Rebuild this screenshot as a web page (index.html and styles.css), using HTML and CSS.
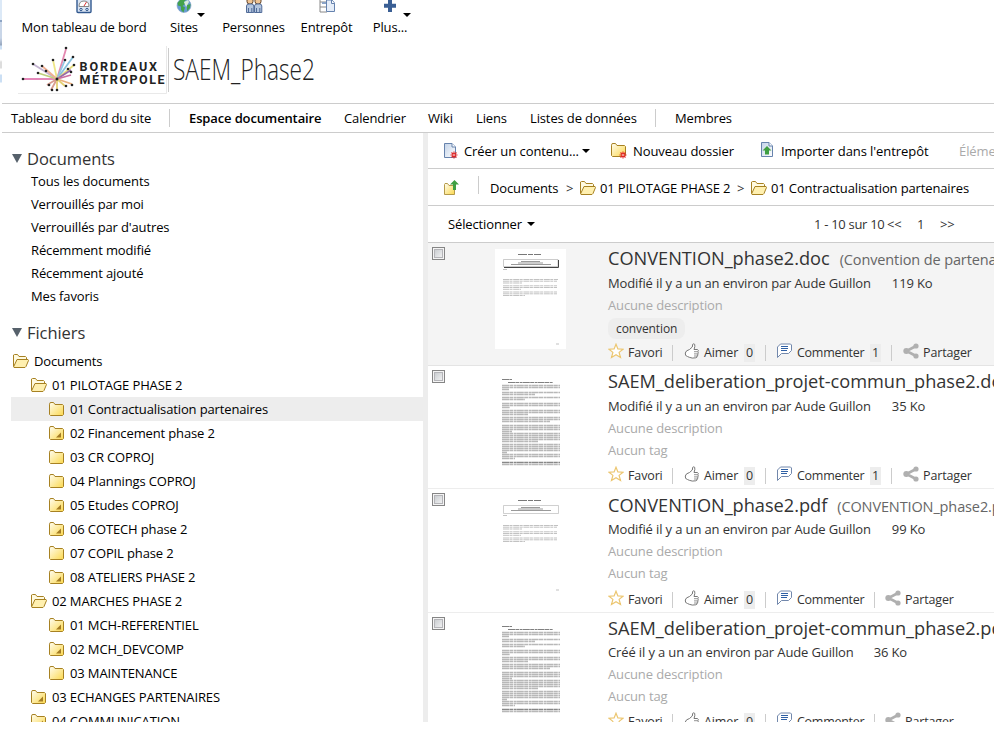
FILE: index.html
```
<!DOCTYPE html>
<html lang="fr">
<head>
<meta charset="utf-8">
<title>SAEM_Phase2</title>
<link rel="stylesheet" href="styles.css">
</head>
<body>
<svg class="defs" width="0" height="0">
  <defs>
    <linearGradient id="gold" x1="0" y1="0" x2="1" y2="1"><stop offset="0" stop-color="#fffdf0"/><stop offset="1" stop-color="#fbd84e"/></linearGradient>
    <linearGradient id="sheet" x1="0" y1="0" x2="1" y2="1"><stop offset="0" stop-color="#c3d3e8"/><stop offset="1" stop-color="#fff"/></linearGradient>
    <symbol id="closed" viewBox="0 0 16 16"><path d="M1.5 3.2 2.2 1.5H5.5L7 3.5H14.5L15.5 4.5V13.5L14.5 14.5H2.5L1.5 13.5Z" fill="url(#gold)" stroke="#a78122"/></symbol>
    <symbol id="linked" viewBox="0 0 16 16"><use href="#closed"/><path d="M8 12.5 13 7.5V12.5Z" fill="#a37c25"/></symbol>
    <symbol id="open" viewBox="0 0 17 16"><path d="M1.500 13.500V2L2.500 1.500H5.500L7 3.500H13.500L14.500 4.500V6.500" fill="#fffae0" stroke="#a78122"/><path d="M1.500 14 5 6.500H16L16.500 7.500 14 13.500 13 14.500H2Z" fill="#fff0b0" stroke="#a78122"/></symbol>
    <symbol id="burst" viewBox="0 0 8 8"><path d="M4 .5V7.500M.5 4H7.500M1.500 1.500 6.500 6.500M6.500 1.500 1.500 6.500" stroke="#e02525" stroke-width="1.100"/><rect x="3.300" y="3.300" width="1.400" height="1.400" fill="#fff"/></symbol>
    <symbol id="star" viewBox="0 0 16 16"><path d="M8 1.200 9.900 5.900 15 6.200 11.100 9.400 12.500 14.500 8 11.700 3.500 14.500 4.900 9.400 1 6.200 6.100 5.900Z" fill="#fff" stroke="#ecc670" stroke-width="1.200"/></symbol>
    <symbol id="thumb" viewBox="0 0 16 16"><path d="M5.500 6.500 8.300 4 8.700 1.300Q9.500.4 10.700 1.300 11.300 3.500 10 6.500H13.500Q15 7.300 13.800 8.800 14.800 9.800 13.700 11 14.400 12.200 13.200 13 13.300 14.500 11.800 14.800 8 15.600 5.300 14.300L3.500 13.500Q.8 13 1.300 10 1.700 7.500 5.500 6.500Z" fill="#fff" stroke="#777"/><path d="M10 8.700H13.500M10 10.900H13.400M10 13H13" stroke="#777" stroke-width=".8"/></symbol>
    <symbol id="comment" viewBox="0 0 16 16"><path d="M1.500 14.500V4L4.500 1H14.500L15.500 2V7.500L12.500 10.500H5.500Z" fill="#fff" stroke="#7288ac"/><path d="M5 3.500H12M5 5.500H12M5 7.500H11" stroke="#2f60a5"/></symbol>
    <symbol id="share" viewBox="0 0 16 16"><path d="M13 3 3.500 8 13 13" fill="none" stroke="#b0b0b0" stroke-width="2.600"/><circle cx="13" cy="3" r="2.600" fill="#b0b0b0"/><circle cx="3.300" cy="8" r="3" fill="#b0b0b0"/><circle cx="13" cy="13" r="2.600" fill="#b0b0b0"/></symbol>
    <symbol id="convention" viewBox="0 0 71 100">
      <g fill="none" stroke="#999" stroke-width=".6">
        <path d="M23 5.500H46" stroke="#555" stroke-width=".8" stroke-dasharray="9 1 5 1"/><path d="M26 12.500H45M23 14H48M16 15.500H56" stroke="#555"/><path d="M8 20.500H12"/>
        <path d="M8 30.500H63M8 32.200H62M8 34H27M8 36.800H62M8 38.500H62M8 40.300H26M8 43H62M8 44.800H62M8 46.500H30" stroke-dasharray="6 .5 3 .7"/>
        <path d="M61 95H64"/>
      </g>
    </symbol>
    <symbol id="deliberation" viewBox="0 0 71 100">
      <g fill="none" stroke="#b8b8b8" stroke-width="1.300" stroke-dasharray="7 .4 4 .6 2.500 .3">
        <path d="M7 7.500H17M13 10.500H58" stroke="#808080" stroke-width="1"/>
        <path d="M7 13.500H65M7 15.500H65M7 17.500H14M7 20.500H65M7 22.500H40M7 25.500H65M7 27.500H30M7 31.500H65M7 33.500H65M7 35.500H15M7 38.500H65M7 40.500H65M7 42.500H33M7 45.500H65M7 47.500H65M7 49.500H55M7 53.500H65M7 55.500H65M7 57.500H65M7 59.500H17M7 61.500H65M7 63.500H65M7 65.500H65M7 67.500H65M7 69.500H43M7 72.500H65M7 74.500H65M7 76.500H65M7 78.500H65M7 80.500H12M7 82.500H65M7 84.500H65M7 86.500H20"/>
        <path d="M7 90.500H65" stroke="#888"/><path d="M7 92.500H65"/>
      </g>
    </symbol>
  </defs>
</svg>
<div class="page">
  <div class="edge"></div>
  <nav class="global">
    <a class="g1"><svg width="16" height="16" viewBox="0 0 16 16"><rect x="1" y="-1" width="14" height="15.500" rx="1" fill="#dbe6f4" stroke="#31588f" stroke-width="1.400"/><path d="M3 8.500Q3 3 8 3T13 8.500Z" fill="#fff" stroke="#888"/><path d="M8 8 10.500 4" stroke="#d33"/><circle cx="5" cy="11.500" r="1.200" fill="none" stroke="#31588f"/><circle cx="11" cy="11.500" r="1.200" fill="none" stroke="#31588f"/></svg><span>Mon tableau de bord</span></a>
    <a class="g2 more"><svg width="16" height="16" viewBox="0 0 16 16"><circle cx="8" cy="7.500" r="7" fill="#679bd3" stroke="#8aa5c8" stroke-width=".6"/><path d="M1.500 5 5 1 11 .8 8 4 9 6 6.500 8 9 9.500 7.500 14.500 5 12 5 8.500 2 7.500ZM11 7 14.500 6 14 10 11 13Z" fill="#43a24c"/><path d="M8 4 12 2 13 4 10 9Z" fill="#d7ecdc"/></svg><span>Sites</span></a>
    <a class="g3"><svg width="18" height="16" viewBox="0 0 18 16"><rect x="2" y="-2" width="6" height="8" rx="2.500" fill="#efc392" stroke="#5c3e25"/><rect x="10" y="-2" width="6" height="8" rx="2.500" fill="#efc392" stroke="#5c3e25"/><path d="M1.500 8Q1.500 6 4 6H6.500Q8.800 6 8.800 8V14.500H1.500ZM9.500 8Q9.500 6 12 6H14.500Q16.800 6 16.800 8V14.500H9.500Z" fill="#b4c6df" stroke="#526c99"/><path d="M3.500 10V14M6.800 10V14M11.500 10V14M14.800 10V14" stroke="#526c99"/></svg><span>Personnes</span></a>
    <a class="g4"><svg width="18" height="16" viewBox="0 0 18 16"><path d="M2 0V14H9M2 4H8M2 9H8" fill="none" stroke="#888"/><path d="M4 .5H9M4 5H9" stroke="#8aa3c6" stroke-width="2"/><path d="M8.500 2H14L16.500 5V13.500H8.500Z" fill="#e5edf8" stroke="#6582ae"/><path d="M13.500 2V5.500H16.500" fill="#fff" stroke="#6582ae"/></svg><span>Entrepôt</span></a>
    <a class="g5 more"><svg width="16" height="16" viewBox="0 0 16 16"><path d="M8 1.500V14M2 7.700H14" stroke="#3a5f94" stroke-width="4"/></svg><span>Plus...</span></a>
  </nav>
  <header class="site">
    <svg class="logo" width="150" height="50" viewBox="0 0 150 50">
      <path d="M148.500 0V47.500H0" fill="none" stroke="#e9e9e9"/>
      <g fill="none" stroke-width="1.800" opacity=".8">
        <path d="M39 33 48 3" stroke="#de6b9c"/><path d="M39 33 5 33" stroke="#de6ba8"/><path d="M39 33 35 14" stroke="#ebe16b"/><path d="M39 33 15 18" stroke="#b5a1c6"/><path d="M39 33 20 27" stroke="#b0c55c"/><path d="M39 33 24 20" stroke="#ed9c77"/><path d="M39 33 47 14" stroke="#78b8db"/><path d="M39 33 55 11" stroke="#68b4d7"/><path d="M39 33 56 19" stroke="#dfd35c"/><path d="M39 33 53 24" stroke="#7e4694"/><path d="M39 33 53 29" stroke="#be4b8a"/><path d="M39 33 54 38" stroke="#e49c5e"/><path d="M39 33 29 39M39 33 33 44" stroke="#d18575"/><path d="M39 33 39 44M39 33 47 40" stroke="#dfc654"/>
      </g>
      <g fill="#222"><circle cx="48" cy="2" r="1.300"/><circle cx="55" cy="11" r="1.300"/><circle cx="47" cy="14" r="1.300"/><circle cx="35" cy="14" r="1.300"/><circle cx="15" cy="18" r="1.300"/><circle cx="24" cy="20" r="1.300"/><circle cx="56" cy="19" r="1.300"/><circle cx="50" cy="23" r="1.300"/><circle cx="53" cy="26" r="1.300"/><circle cx="20" cy="27" r="1.300"/><circle cx="28" cy="25" r="1.300"/><circle cx="5" cy="33" r="1.300"/><circle cx="39" cy="33" r="1.500"/><circle cx="54" cy="39" r="1.300"/><circle cx="31" cy="39" r="1.300"/><circle cx="34" cy="44" r="1.300"/><circle cx="39" cy="44" r="1.300"/><circle cx="48" cy="40" r="1.300"/></g>
      <text class="brand" x="61.500" y="25" textLength="77.500">BORDEAUX</text>
      <text class="brand" x="61.500" y="38" textLength="85">MÉTROPOLE</text>
    </svg>
    <svg class="sitename" width="161" height="44" viewBox="0 0 160 44"><text x="4" y="31.500" textLength="142" lengthAdjust="spacingAndGlyphs">SAEM_Phase2</text></svg>
  </header>
  <nav class="tabs">
    <a class="t1">Tableau de bord du site</a><i></i><a class="t2">Espace documentaire</a><a class="t3">Calendrier</a><a class="t4">Wiki</a><a class="t5">Liens</a><a class="t6">Listes de données</a><i></i><a class="t7">Membres</a>
  </nav>
  <div class="columns">
    <aside>
      <h2>Documents</h2>
      <ul class="filters"><li>Tous les documents</li><li>Verrouillés par moi</li><li>Verrouillés par d'autres</li><li>Récemment modifié</li><li>Récemment ajouté</li><li>Mes favoris</li></ul>
      <h2>Fichiers</h2>
      <ul class="tree">
        <li><svg class="wide"><use href="#open"/></svg><span>Documents</span></li>
        <li class="l1"><svg class="wide"><use href="#open"/></svg><span>01 PILOTAGE PHASE 2</span></li>
        <li class="l2 current"><svg><use href="#closed"/></svg><span>01 Contractualisation partenaires</span></li>
        <li class="l2"><svg><use href="#linked"/></svg><span>02 Financement phase 2</span></li>
        <li class="l2"><svg><use href="#closed"/></svg><span>03 CR COPROJ</span></li>
        <li class="l2"><svg><use href="#closed"/></svg><span>04 Plannings COPROJ</span></li>
        <li class="l2"><svg><use href="#linked"/></svg><span>05 Etudes COPROJ</span></li>
        <li class="l2"><svg><use href="#linked"/></svg><span>06 COTECH phase 2</span></li>
        <li class="l2"><svg><use href="#closed"/></svg><span>07 COPIL phase 2</span></li>
        <li class="l2"><svg><use href="#linked"/></svg><span>08 ATELIERS PHASE 2</span></li>
        <li class="l1"><svg class="wide"><use href="#open"/></svg><span>02 MARCHES PHASE 2</span></li>
        <li class="l2"><svg><use href="#linked"/></svg><span>01 MCH-REFERENTIEL</span></li>
        <li class="l2"><svg><use href="#linked"/></svg><span>02 MCH_DEVCOMP</span></li>
        <li class="l2"><svg><use href="#closed"/></svg><span>03 MAINTENANCE</span></li>
        <li class="l1"><svg><use href="#linked"/></svg><span>03 ECHANGES PARTENAIRES</span></li>
        <li class="l1"><svg><use href="#linked"/></svg><span>04 COMMUNICATION</span></li>
      </ul>
    </aside>
    <main>
      <div class="bar tools">
        <svg width="16" height="16" viewBox="0 0 16 16"><path d="M1.500.5H9L12.500 4V14.500H1.500Z" fill="url(#sheet)" stroke="#6783ad"/><path d="M9 .5V4H12.500" fill="#fff" stroke="#6783ad"/><use href="#burst" x="7" y="8" width="8" height="8"/></svg>
        <span class="create">Créer un contenu...</span><b class="caret"></b>
        <svg class="newf" width="16" height="16" viewBox="0 0 16 16"><use href="#closed" x="-1" y="-1" width="16" height="16"/><use href="#burst" x="8" y="8" width="8" height="8"/></svg>
        <span class="folder">Nouveau dossier</span>
        <svg class="imp" width="14" height="16" viewBox="0 0 14 16"><path d="M1.500.5H9L12.500 4V14.500H1.500Z" fill="url(#sheet)" stroke="#6783ad"/><path d="M9 .5V4H12.500" fill="#fff" stroke="#6783ad"/><path d="M7 4 11.500 8.500H9V12.500H5V8.500H2.500Z" fill="#3f9f42"/></svg>
        <span class="import">Importer dans l'entrepôt</span>
        <span class="off">Éléments sélectionnés...</span>
      </div>
      <div class="bar crumbs">
        <svg width="16" height="16" viewBox="0 0 16 16"><path d="M1.500 4.500 2 3.500H4.500L6 5.500H11.500V14.500H1.500Z" fill="url(#gold)" stroke="#b59a4a"/><path d="M11.500 0 16 4.500H13V10H10V4.500H7Z" fill="#3f9f42"/></svg>
        <i></i><span class="c1">Documents</span><span class="gt">&gt;</span><svg class="wide"><use href="#open"/></svg><span class="c2">01 PILOTAGE PHASE 2</span><span class="gt">&gt;</span><svg class="wide"><use href="#open"/></svg><span class="c3">01 Contractualisation partenaires</span>
      </div>
      <div class="bar picker"><span class="select">Sélectionner</span><b class="caret"></b><span class="count">1 - 10 sur 10</span><span class="prev">&lt;&lt;</span><span class="num">1</span><span class="next">&gt;&gt;</span></div>

      <article class="row hover">
        <div class="check"></div><svg class="preview paper"><use href="#convention"/><path d="M8.500 10.500H63V17.500H8.500Z" fill="none" stroke="#aaa" stroke-width=".6"/><path d="M9 18.500H63.500V11" fill="none" stroke="#444"/></svg>
        <div class="info"><h3><span>CONVENTION_phase2.doc</span><small>(Convention de partenariat)</small></h3>
        <p class="meta"><span>Modifié il y a un an environ par Aude Guillon</span><span>119 Ko</span></p><p class="none">Aucune description</p><p class="tagline"><em>convention</em></p>
        <div class="acts"><svg><use href="#star"/></svg><span class="fav">Favori</span><i></i><svg class="th"><use href="#thumb"/></svg><span class="like">Aimer</span><b>0</b><i></i><svg class="cm"><use href="#comment"/></svg><span class="com">Commenter</span><b>1</b><i class="last"></i><svg class="sh"><use href="#share"/></svg><span class="part">Partager</span></div></div>
      </article>
      <article class="row">
        <div class="check"></div><svg class="preview"><use href="#deliberation"/></svg>
        <div class="info"><h3><span>SAEM_deliberation_projet-commun_phase2.doc</span></h3>
        <p class="meta"><span>Modifié il y a un an environ par Aude Guillon</span><span>35 Ko</span></p><p class="none">Aucune description</p><p class="none tagline">Aucun tag</p>
        <div class="acts"><svg><use href="#star"/></svg><span class="fav">Favori</span><i></i><svg class="th"><use href="#thumb"/></svg><span class="like">Aimer</span><b>0</b><i></i><svg class="cm"><use href="#comment"/></svg><span class="com">Commenter</span><b>1</b><i class="last"></i><svg class="sh"><use href="#share"/></svg><span class="part">Partager</span></div></div>
      </article>
      <article class="row tall">
        <div class="check"></div><svg class="preview"><use href="#convention"/><path d="M8.500 10.500H63.500V18.500H8.500Z" fill="none" stroke="#bbb" stroke-width=".7"/></svg>
        <div class="info"><h3><span>CONVENTION_phase2.pdf</span><small>(CONVENTION_phase2.pdf)</small></h3>
        <p class="meta"><span>Modifié il y a un an environ par Aude Guillon</span><span>99 Ko</span></p><p class="none">Aucune description</p><p class="none tagline">Aucun tag</p>
        <div class="acts"><svg><use href="#star"/></svg><span class="fav">Favori</span><i></i><svg class="th"><use href="#thumb"/></svg><span class="like">Aimer</span><b>0</b><i></i><svg class="cm"><use href="#comment"/></svg><span class="com">Commenter</span><i></i><svg class="sh"><use href="#share"/></svg><span class="part">Partager</span></div></div>
      </article>
      <article class="row end">
        <div class="check"></div><svg class="preview"><use href="#deliberation"/></svg>
        <div class="info"><h3><span>SAEM_deliberation_projet-commun_phase2.pdf</span></h3>
        <p class="meta"><span>Créé il y a un an environ par Aude Guillon</span><span>36 Ko</span></p><p class="none">Aucune description</p><p class="none tagline">Aucun tag</p>
        <div class="acts"><svg><use href="#star"/></svg><span class="fav">Favori</span><i></i><svg class="th"><use href="#thumb"/></svg><span class="like">Aimer</span><b>0</b><i></i><svg class="cm"><use href="#comment"/></svg><span class="com">Commenter</span><i></i><svg class="sh"><use href="#share"/></svg><span class="part">Partager</span></div></div>
      </article>
    </main>
  </div>
</div>
</body>
</html>
```
FILE: styles.css
```
* { box-sizing: border-box; }
body { margin: 0; width: 994px; height: 746px; overflow: hidden; background: #fff; font: 13px/18px "Open Sans", sans-serif; letter-spacing: -.13px; color: #000; white-space: nowrap; }
ul, h2, h3, p { margin: 0; padding: 0; list-style: none; font-weight: 400; }
i, em { font-style: normal; }
.defs { position: absolute; }
svg { display: block; flex: none; letter-spacing: 0; }
.page { position: relative; height: 722px; overflow: hidden; display: flex; flex-direction: column; }
.edge { position: absolute; left: 0; top: 0; width: 2px; height: 83px; background: linear-gradient(#dce9f7 0 20px, #8da4c4 20px 22px, #c9d6e8 22px 38px, #95a5bd 45px, #cbdff4 46px 49px, #fff 50px 60px, #ddd 62px 68px, #fff 69px 74px, #cbdff4 75px 82px, #fff 83px); }

.global { height: 42px; flex: none; display: flex; padding-left: 21px; }
.global a { position: relative; display: flex; flex-direction: column; align-items: center; flex: none; margin-top: -2px; }
.global span { margin-top: 4px; }
.g1 { width: 126px; margin-right: 23px; }
.g2 { width: 28px; margin-right: 24px; }
.g3 { width: 63px; margin-right: 15px; }
.g4 { width: 53px; margin-right: 20px; }
.g5 { width: 34px; }
.more::after, .caret { content: ""; border: 4px solid transparent; border-top-color: #000; border-bottom: 0; }
.more::after { position: absolute; left: 27px; top: 15px; }
.g5.more::after { left: 30px; }
.caret { width: 8px; height: 4px; flex: none; }

.site { height: 61px; flex: none; display: flex; padding: 4px 0 0 18px; }
.logo, .sitename { overflow: visible; }
.brand { font: 700 12.5px Roboto, sans-serif; fill: #222; }
.sitename { height: 44px; margin-top: 2px; border-left: 1px solid #ccc; }
.sitename text { font: 300 30px "Open Sans", sans-serif; fill: #222; }

.tabs { height: 30px; flex: none; margin-left: 2px; padding-left: 9px; border: solid #ccc; border-width: 1px 0; display: flex; align-items: center; }
.tabs a, .tabs i { flex: none; }
.tabs i { width: 1px; height: 18px; background: #ccc; margin-right: 19px; }
.t1 { width: 158px; } .t2 { width: 155px; font-weight: 600; } .t3 { width: 84px; } .t4 { width: 48px; } .t5 { width: 54px; } .t6 { width: 125px; }

.columns { display: flex; flex: 1; min-height: 0; }
aside { width: 428px; flex: none; border-right: 5px solid #ededed; padding: 14px 0 0 11px; overflow: hidden; }
h2 { display: flex; align-items: center; height: 24px; font-size: 16.500px; letter-spacing: -.05px; color: #333; }
h2::before { content: ""; border: 5px solid transparent; border-top: 9px solid #56616b; border-bottom: 0; margin: -2px 5px 0 1px; }
.filters { padding: 0 0 12px 20px; }
.filters li { height: 23px; line-height: 21px; }
.tree { padding-top: 4px; }
.tree li { height: 24px; display: flex; align-items: center; }
.tree svg, .acts svg { width: 16px; height: 16px; margin-right: 6px; }
.tree svg.wide, .crumbs svg.wide { width: 17px; height: 16px; }
.tree svg.wide { margin: 0 5px 0 1px; }
.l1 { padding-left: 18px; }
.l2 { padding-left: 37px; }
.l1 > svg:not(.wide) { margin-left: 1px; }
.current { background: #ededed; }

main { flex: 1; min-width: 0; overflow: hidden; }
.bar { height: 37px; border-bottom: 1px solid #ccc; display: flex; align-items: center; }
.bar > * { flex: none; }
.tools { height: 36px; padding-left: 15px; letter-spacing: -.07px; }
.create { width: 114px; margin: 0 4px 0 5px; }
.newf { margin: 0 6px 0 21px; }
.folder { width: 101px; }
.tools .imp { margin: -2px 7px 0 26px; }
.import { width: 148px; }
.off { margin-left: 30px; color: #aaa; }
.crumbs { padding: 1px 0 0 15px; }
.crumbs i { width: 1px; height: 18px; background: #ccc; margin: -5px 11px 0 19px; }
.c1 { width: 70px; }
.gt { width: 19px; padding-left: 6px; color: #333; }
.c2 { width: 131px; }
.crumbs .wide { margin-right: 4px; }
.picker { padding-left: 20px; color: #333; }
.select { width: 74px; margin-right: 5px; color: #000; }
.picker .caret { margin-right: 279px; }
.count { width: 73px; letter-spacing: -.3px; } .prev { width: 30px; } .num { width: 23px; }

.row { height: 123px; border-bottom: 1px solid #ededed; display: flex; color: #333; }
.row.hover { background: #f4f4f4; border-color: #e4e4e4; }
.row.tall { height: 124px; }
.check { width: 13px; height: 13px; margin: 4px 50px 0 4px; flex: none; border: 1px solid #858585; background: linear-gradient(135deg, #c0c4c8, #fafafa); box-shadow: inset 0 0 0 1px #f4f4f4, inset 0 0 0 2px #b4b4b8; }
.preview { width: 71px; height: 100px; margin: 6px 42px 0 0; }
.paper { background: #fff; }
.info { padding-top: 1px; }
h3 { height: 28px; line-height: 28px; font-size: 18.200px; letter-spacing: -.02px; }
small { font-size: 14.500px; letter-spacing: -.12px; color: #666; margin-left: 10px; }
.meta { height: 22px; line-height: 22px; }
.meta span + span { margin-left: 21px; }
.end .meta span + span { margin-left: 20px; }
.none { height: 22px; line-height: 22px; color: #aaa; }
p.tagline { height: 23px; }
em { display: inline-block; padding: 0 8px; border-radius: 8px; background: #ededed; line-height: 21px; margin-top: 2px; font-size: 12px; letter-spacing: -.1px; }
.acts { height: 28px; display: flex; align-items: center; font-size: 12.500px; }
.tall .info { padding-top: 2px; }
.tall .meta { margin-top: -1px; }
.tall .acts { margin-top: 1px; }
.end .meta { margin-top: -1px; }
.acts > * { flex: none; }
.acts svg { margin: -4px 4px 0 0; }
.acts .cm { margin-left: -1px; }
.acts i { width: 1px; height: 16px; background: #ccc; margin-right: 11px; }
.acts b { width: 11px; height: 18px; text-align: center; font-weight: 400; background: #ededed; margin-right: 10px; }
.fav { width: 44px; }
.like { width: 40px; }
.com { width: 73px; margin-left: 1px; letter-spacing: -.28px; }
.com + i { margin-left: 4px; }
.com + i, .last { margin-right: 10px; }
```
